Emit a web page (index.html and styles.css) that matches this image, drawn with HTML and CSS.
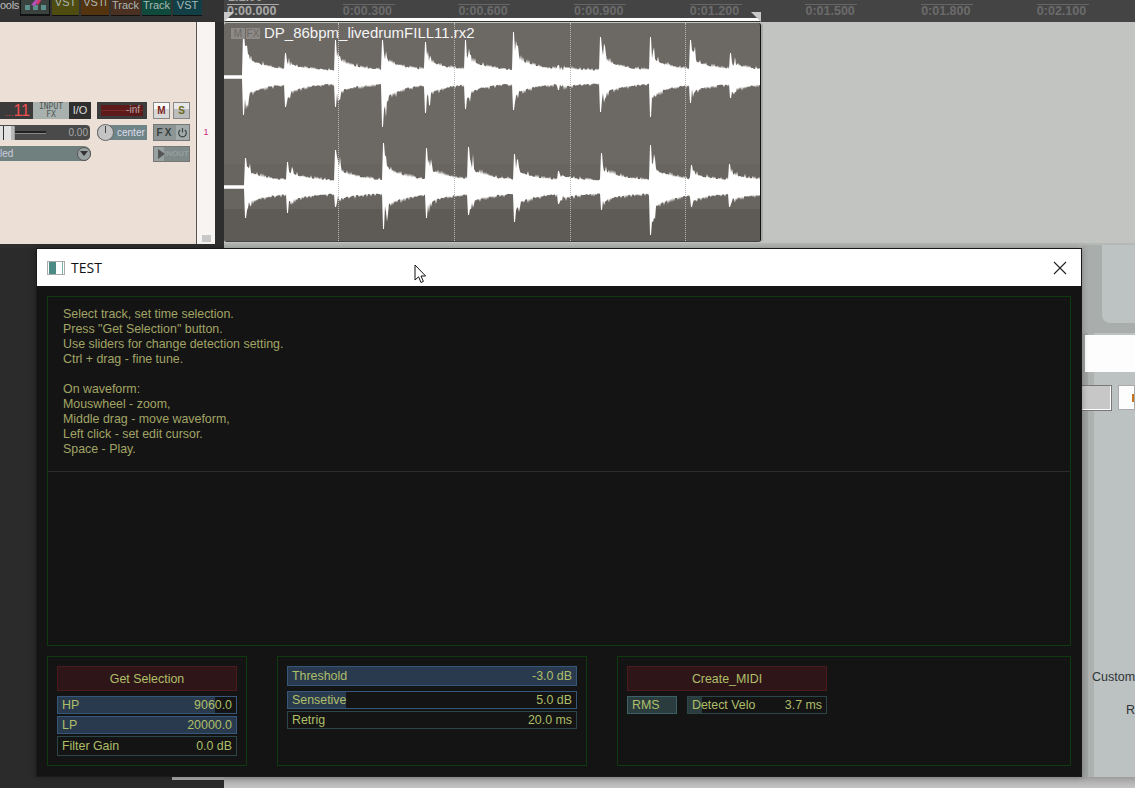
FILE: index.html
```html
<!DOCTYPE html>
<html lang="en">
<head>
    <meta charset="UTF-8" />
    <title>TEST</title>
    <link rel="stylesheet" href="styles.css">
</head>
<body>
<div class="desktop">

    <!-- DAW behind the script window -->
    <div class="daw">
        <div class="side">
            <div class="toolbar">
                <div class="tb-btn tb-tools">ools</div>
                <div class="tb-btn tb-icon">
                    <svg width="30" height="15" viewBox="0 0 30 15">
                        <rect x="5" y="6" width="5" height="5" fill="#5c8f8c"/>
                        <rect x="13" y="6" width="5" height="5" fill="#5c8f8c"/>
                        <rect x="21" y="6" width="5" height="5" fill="#5c8f8c"/>
                        <path d="M11 6 L16 0 L20 0 L15 7 Z" fill="#b04fb8"/>
                        <path d="M16 4 L19 0 L22 0 L18 6 Z" fill="#d23a6a"/>
                    </svg>
                </div>
                <div class="tb-btn tb-vst">VST</div>
                <div class="tb-btn tb-vsti">VSTi</div>
                <div class="tb-btn tb-track1">Track</div>
                <div class="tb-btn tb-track2">Track</div>
                <div class="tb-btn tb-vst2">VST</div>
            </div>
            <div class="track-row">
                <div class="tcp">
                    <div class="tcp-line">
                        <div class="tcp-left">
                            <div class="name-box">...<b>11</b></div>
                            <div class="input-fx">INPUT<br>FX</div>
                            <div class="io">I/O</div>
                        </div>
                        <div class="meter"><span>-inf</span></div>
                        <div class="tcp-right">
                            <div class="small-btn btn-m">M</div>
                            <div class="small-btn btn-s">S</div>
                        </div>
                    </div>
                    <div class="tcp-line">
                        <div class="fader">
                            <div class="fader-handle"></div>
                            <div class="fader-track"></div>
                            <span>0.00</span>
                        </div>
                        <div class="pan">
                            <div class="pan-knob"></div>
                            <span>center</span>
                        </div>
                        <div class="tcp-right">
                            <div class="fx-btn">
                                <span class="fx-label">FX</span>
                                <span class="fx-power">
                                    <svg width="11" height="11" viewBox="0 0 11 11"><path d="M3.2 3 A3.8 3.8 0 1 0 7.8 3 M5.5 1 V5.5" fill="none" stroke="#3c4444" stroke-width="1.2"/></svg>
                                </span>
                            </div>
                        </div>
                    </div>
                    <div class="tcp-line">
                        <div class="dropdown">
                            <span>led</span>
                            <div class="drop-arrow"></div>
                        </div>
                        <div class="tcp-right tcp-right-far">
                            <div class="route-btn">
                                <span class="route-play"></span>
                                <span class="route-label">INOUT</span>
                            </div>
                        </div>
                    </div>
                </div>
                <div class="track-num"><span>1</span><div class="corner-mark"></div></div>
            </div>
        </div>

        <div class="main">
            <div class="ruler">
                <div class="bar-label">1.1.00</div>
                <div class="tick tick-first"><span>0:00.000</span></div>
                <div class="tick"><span>0:00.300</span></div>
                <div class="tick"><span>0:00.600</span></div>
                <div class="tick"><span>0:00.900</span></div>
                <div class="tick"><span>0:01.200</span></div>
                <div class="tick"><span>0:01.500</span></div>
                <div class="tick"><span>0:01.800</span></div>
                <div class="tick"><span>0:02.100</span></div>
                <div class="sel-bar"></div>
            </div>
            <div class="arrange">
                <div class="item">
                    <div class="item-band"></div>
                    <svg class="wave" width="536" height="218" viewBox="0 0 536 218">
                        <path id="wave-top" fill="#fff"/>
                        <path id="wave-bottom" fill="#fff"/>
                    </svg>
                    <div class="grid-line grid-1"></div>
                    <div class="grid-line grid-2"></div>
                    <div class="grid-line grid-3"></div>
                    <div class="grid-line grid-4"></div>
                    <div class="item-head">
                        <span class="item-tag">M</span>
                        <span class="item-tag">FX</span>
                        <span class="item-name">DP_86bpm_livedrumFILL11.rx2</span>
                    </div>
                </div>
            </div>
            <div class="arrange-foot"></div>
        </div>
    </div>

    <!-- another window, mostly hidden -->
    <div class="back-window">
        <div class="back-head"><div class="back-head-inner"></div></div>
        <div class="back-white"></div>
        <div class="back-buttons">
            <div class="back-btn"></div>
            <div class="back-btn2"></div>
        </div>
        <div class="back-custom">Custom</div>
        <div class="back-r">R</div>
    </div>

    <div class="bottom-strip"></div>

    <div class="script-window">
        <div class="title-bar">
            <div class="title-icon"></div>
            <span class="title-text">TEST</span>
            <svg class="title-close" width="14" height="14" viewBox="0 0 14 14"><path d="M1 1 L13 13 M13 1 L1 13" stroke="#222" stroke-width="1.1"/></svg>
        </div>
        <div class="window-body">
            <div class="panel panel-top">
                <div class="help">
                    Select track, set time selection.<br>
                    Press "Get Selection" button.<br>
                    Use sliders for change detection setting.<br>
                    Ctrl + drag - fine tune.<br>
                    <br>
                    On waveform:<br>
                    Mouswheel - zoom,<br>
                    Middle drag - move waveform,<br>
                    Left click - set edit cursor.<br>
                    Space - Play.
                </div>
                <div class="panel-line"></div>
            </div>
            <div class="panel-row">
                <div class="panel panel-a">
                    <div class="action">Get Selection</div>
                    <div class="slider slider-blue">
                        <div class="slider-fill" style="width: 88%"></div>
                        <span class="slider-name">HP</span><span>9060.0</span>
                    </div>
                    <div class="slider slider-blue">
                        <div class="slider-fill" style="width: 100%"></div>
                        <span class="slider-name">LP</span><span>20000.0</span>
                    </div>
                    <div class="slider slider-plain slider-tall">
                        <span class="slider-name">Filter Gain</span><span>0.0 dB</span>
                    </div>
                </div>
                <div class="panel panel-b">
                    <div class="slider slider-blue slider-big">
                        <div class="slider-fill" style="width: 100%"></div>
                        <span class="slider-name">Threshold</span><span>-3.0 dB</span>
                    </div>
                    <div class="slider slider-blue">
                        <div class="slider-fill" style="width: 20%"></div>
                        <span class="slider-name">Sensetive</span><span>5.0 dB</span>
                    </div>
                    <div class="slider slider-plain">
                        <span class="slider-name">Retrig</span><span>20.0 ms</span>
                    </div>
                </div>
                <div class="panel panel-c">
                    <div class="action action-wide">Create_MIDI</div>
                    <div class="velo-row">
                        <div class="slider slider-teal rms"><span class="slider-name">RMS</span></div>
                        <div class="slider slider-plain velo">
                            <div class="slider-fill slider-fill-teal" style="width: 10%"></div>
                            <span class="slider-name">Detect Velo</span><span>3.7 ms</span>
                        </div>
                    </div>
                </div>
            </div>
        </div>
    </div>

    <svg class="mouse" width="13" height="20" viewBox="0 0 13 20">
        <path d="M1 1 V16 L4.6 12.8 L7 18.5 L9.4 17.4 L7 12 H11.6 Z" fill="#fff" stroke="#111" stroke-width="1"/>
    </svg>
</div>
<script src="waveform.js"></script>
</body>
</html>
```

FILE: styles.css
```css
* {
    box-sizing: border-box;
}
html, body {
    margin: 0;
    height: 100%;
    overflow: hidden;
}
body {
    font-family: "Liberation Sans", Arial, sans-serif;
    background-color: #2b2b2b;
}
.desktop {
    position: relative;
    width: 1135px;
    height: 788px;
    overflow: hidden;
}

/* DAW */
.daw {
    display: flex;
    height: 248px;
}
.side {
    width: 224px;
    flex: none;
    background-color: #2e2e2e;
}
.toolbar {
    display: flex;
    gap: 2px;
    height: 22px;
    padding-bottom: 7px;
    background-color: #333;
}
.tb-btn {
    width: 29px;
    font-size: 11px;
    line-height: 11px;
    text-align: center;
    color: #a9b7b5;
    box-shadow: 0 1px 0 #111;
}
.tb-tools {
    width: 18px;
    text-align: left;
    letter-spacing: -0.3px;
    color: #bbb;
    background-color: #333;
    box-shadow: none;
}
.tb-icon {
    width: 30px;
    background-color: #3a4240;
    border: 1px solid #111;
    border-top: 0;
}
.tb-icon svg {
    display: block;
    margin: -1px;
}
.tb-vst {
    width: 27px;
    background-color: #4f4c12;
    line-height: 5px;
}
.tb-vsti {
    width: 28px;
    background-color: #54330f;
    line-height: 5px;
}
.tb-track1 {
    background-color: #4a3020;
}
.tb-track2 {
    background-color: #0f4a3c;
}
.tb-vst2 {
    background-color: #123f46;
    line-height: 11px;
}
.track-row {
    display: flex;
    height: 222px;
}
.tcp {
    width: 197px;
    padding-top: 80px;
    background-color: #ecdfd6;
    border-right: 1px solid #555;
}
.tcp-line {
    display: flex;
    align-items: flex-start;
    height: 22px;
}
.tcp-left {
    display: flex;
    width: 91px;
    height: 17px;
    background-color: #2f2f2f;
}
.name-box {
    width: 33px;
    padding-right: 3px;
    font-size: 10px;
    line-height: 17px;
    text-align: right;
    color: #c84848;
    background-color: #3a3a3a;
}
.name-box b {
    font-size: 16px;
    font-weight: normal;
    color: #f05050;
}
.input-fx {
    width: 36px;
    font-family: "DejaVu Sans Mono", monospace;
    font-size: 8px;
    line-height: 8px;
    padding-top: 1px;
    text-align: center;
    color: #4b5552;
    background-color: #a9b1af;
}
.io {
    flex: 1;
    font-size: 11px;
    line-height: 17px;
    text-align: center;
    color: #ddd;
}
.meter {
    width: 50px;
    height: 17px;
    margin-left: 6px;
    padding: 3px 4px;
    background-color: #3c3c3c;
}
.meter span {
    display: block;
    height: 11px;
    padding-right: 3px;
    font-size: 10px;
    line-height: 10px;
    text-align: right;
    color: #b5a5a5;
    background: linear-gradient(#5c1a1a 0 45%, #7a2c2c 45% 55%, #5c1a1a 55%);
}
.tcp-right {
    display: flex;
    gap: 3px;
    margin-left: 6px;
}
.small-btn {
    width: 17px;
    height: 17px;
    font-size: 10px;
    font-weight: bold;
    line-height: 16px;
    text-align: center;
    border: 1px solid #888;
    background: linear-gradient(#fafafa 0 40%, #d8d8d8 40%);
}
.btn-m {
    color: #7c1c1c;
}
.btn-s {
    color: #6a6a20;
    background: linear-gradient(#e8e8e8 0 40%, #bcbcbc 40%);
}
.fader {
    display: flex;
    align-items: center;
    width: 90px;
    height: 15px;
    margin-top: 1px;
    background-color: #4a4a4a;
    border-radius: 0 4px 4px 0;
    font-size: 10px;
    color: #a8a8a8;
}
.fader-handle {
    width: 15px;
    height: 14px;
    background: linear-gradient(90deg, #e2e2e2 0 3px, #333 3px 4px, #e2e2e2 4px 11px, #b8b8b8 11px);
    border-right: 1px solid #999;
}
.fader-track {
    width: 31px;
    height: 3px;
    background-color: #222;
    border-bottom: 1px solid #888;
}
.fader span {
    flex: 1;
    padding-right: 2px;
    text-align: right;
}
.pan {
    display: flex;
    align-items: center;
    width: 50px;
    height: 15px;
    margin-left: 7px;
    margin-top: 1px;
    font-size: 10px;
    color: #dde;
    background-color: #6f8486;
    border-radius: 7px 0 0 7px;
}
.pan-knob {
    position: relative;
    width: 17px;
    height: 17px;
    flex: none;
    margin-right: 3px;
    border-radius: 50%;
    border: 1px solid #666;
    background-color: #c4c4c4;
}
.pan-knob::after {
    content: "";
    position: absolute;
    left: 7px;
    top: 1px;
    width: 1px;
    height: 7px;
    background-color: #444;
}
.fx-btn {
    display: flex;
    width: 37px;
    height: 17px;
    background-color: #8d9695;
    border: 1px solid #777;
    font-size: 10px;
}
.fx-label {
    flex: 1;
    font-weight: bold;
    letter-spacing: 2px;
    line-height: 15px;
    text-align: center;
    color: #38403f;
}
.fx-power {
    width: 13px;
    padding: 2px 1px;
    background-color: #a3abaa;
}
.fx-power svg {
    display: block;
}
.dropdown {
    display: flex;
    align-items: center;
    justify-content: space-between;
    width: 91px;
    height: 15px;
    font-size: 10px;
    color: #ccd;
    background-color: #70807f;
    border-radius: 0 8px 8px 0;
}
.drop-arrow {
    position: relative;
    width: 14px;
    height: 14px;
    border-radius: 50%;
    background-color: #9ba3a2;
    border: 1px solid #555;
}
.drop-arrow::after {
    content: "";
    position: absolute;
    left: 2px;
    top: 3px;
    border: 4px solid transparent;
    border-top: 5px solid #333;
}
.tcp-right-far {
    margin-left: 62px;
}
.route-btn {
    display: flex;
    width: 37px;
    height: 16px;
    background-color: #7e8988;
    border: 1px solid #777;
}
.route-play {
    width: 14px;
    position: relative;
    background-color: #98a1a0;
}
.route-play::after {
    content: "";
    position: absolute;
    left: 4px;
    top: 2px;
    border: 5px solid transparent;
    border-left: 7px solid #555;
}
.route-label {
    flex: 1;
    font-size: 8px;
    font-weight: bold;
    line-height: 14px;
    text-align: center;
    color: #96a0a0;
}
.track-num {
    display: flex;
    flex-direction: column;
    align-items: center;
    justify-content: flex-end;
    width: 18px;
    padding-bottom: 2px;
    background-color: #f7f4f2;
    font-size: 9px;
    color: #d02a7a;
}
.track-num span {
    margin-bottom: 98px;
}
.corner-mark {
    width: 9px;
    height: 7px;
    align-self: flex-end;
    margin-right: 4px;
    background-color: #c8c8c8;
}
.main {
    position: relative;
    flex: 1;
    display: flex;
    flex-direction: column;
    background-color: #c2c4c2;
}
.ruler {
    position: relative;
    display: flex;
    height: 22px;
    overflow: hidden;
    background-color: #444;
}
.bar-label {
    position: absolute;
    left: 4px;
    top: -9px;
    font-size: 12.5px;
    font-weight: bold;
    line-height: 13px;
    color: #a8a8a8;
}
.tick {
    width: 115.7px;
    flex: none;
    padding: 4px 0 0 3px;
    font-size: 12.5px;
    font-weight: bold;
    line-height: 13px;
    color: #6b6b6b;
}
.tick span {
    display: block;
    width: 52px;
    border-top: 1px solid #666;
}
.tick-first {
    color: #a8a8a8;
}
.tick-first span {
    border-top-color: #aaa;
}
.sel-bar {
    position: absolute;
    left: 0;
    top: 18px;
    width: 537px;
    height: 4px;
    background-color: #fff;
    border-bottom: 1px solid #333;
}
.sel-bar::before,
.sel-bar::after {
    content: "";
    position: absolute;
    top: -6px;
    width: 10px;
    height: 10px;
    background-color: #c8c8c8;
}
.sel-bar::before {
    left: 0;
    clip-path: polygon(0 0, 100% 0, 0 100%);
}
.sel-bar::after {
    right: 0;
    clip-path: polygon(0 0, 100% 0, 100% 100%);
}
.arrange {
    height: 221px;
}
.item {
    position: relative;
    width: 537px;
    height: 219px;
    margin-top: 1px;
    overflow: hidden;
    background-color: #6c6864;
    border-right: 1px solid #111;
    border-bottom: 1px solid #444;
    border-radius: 3px;
    box-shadow: 2px 0 0 #a8aaa8;
}
.item-band {
    position: absolute;
    left: 0;
    right: 0;
    top: 141px;
    bottom: 0;
    background: linear-gradient(#68645f 0 45px, #5e5a56 45px);
}
.wave {
    position: absolute;
    left: 0;
    top: 0;
}
.grid-line {
    position: absolute;
    top: 0;
    bottom: 0;
    width: 0;
    border-left: 1px dotted #b8b8b8;
}
.grid-1 { left: 114px; }
.grid-2 { left: 230px; }
.grid-3 { left: 346px; }
.grid-4 { left: 461px; }
.item-head {
    position: absolute;
    left: 7px;
    top: 1px;
    display: flex;
    align-items: center;
    gap: 1px;
}
.item-tag {
    width: 14px;
    height: 11px;
    font-size: 10px;
    line-height: 11px;
    text-align: center;
    color: #6c6864;
    background-color: #8c8986;
}
.item-name {
    margin-left: 3px;
    font-size: 15px;
    line-height: 18px;
    color: #f4f4f4;
}
.arrange-foot {
    height: 5px;
    background-color: #b6b8b6;
}

/* window behind, right of the script window */
.back-window {
    position: absolute;
    left: 1082px;
    top: 245px;
    width: 53px;
    height: 532px;
    background: linear-gradient(90deg, #9fa3a2 0 6px, #adb1b0 6px 12px, #bcc2c1 12px);
}
.back-head {
    height: 88px;
    padding: 0 0 10px 20px;
    background-color: #a9adac;
}
.back-head-inner {
    height: 100%;
    background-color: #bcc3c2;
    border-bottom-left-radius: 8px;
}
.back-white {
    height: 37px;
    margin: 2px 0 0 3px;
    background-color: #fdfdfd;
}
.back-buttons {
    display: flex;
    gap: 6px;
    margin-top: 13px;
}
.back-btn {
    width: 30px;
    height: 26px;
    background-color: #c6c7c6;
    border: 1px solid #777;
    border-left: 0;
    box-shadow: inset -1px -1px 0 #fff;
}
.back-btn2 {
    position: relative;
    flex: 1;
    height: 25px;
    background-color: #fdfdfd;
    border: 1px solid #aaa;
}
.back-btn2::after {
    content: "";
    position: absolute;
    right: 0;
    top: 8px;
    width: 2px;
    height: 8px;
    background-color: #c8761e;
}
.back-custom {
    margin: 259px 0 0 10px;
    font-size: 12.5px;
    white-space: nowrap;
    color: #2f3438;
}
.back-r {
    margin: 19px 0 0 44px;
    font-size: 12.5px;
    color: #2f3438;
}
.bottom-strip {
    position: absolute;
    left: 224px;
    right: 0;
    top: 777px;
    height: 11px;
    background: linear-gradient(#9c9c9c, #b4b4b4 50%, #c2c4c2);
}
.bottom-strip::before {
    content: "";
    position: absolute;
    left: -52px;
    top: 0;
    width: 52px;
    height: 3px;
    background-color: #a8a8a8;
}

/* script window */
.script-window {
    position: absolute;
    left: 36px;
    top: 248px;
    width: 1046px;
    height: 529px;
    background-color: #141414;
    border: 1px solid #1a1a1a;
    box-shadow: 0 0 6px rgba(0,0,0,0.3);
}
.title-bar {
    display: flex;
    align-items: center;
    height: 37px;
    padding: 0 14px 0 10px;
    background-color: #fff;
}
.title-icon {
    width: 18px;
    height: 14px;
    margin-right: 6px;
    border: 1px solid #aaa;
    background: linear-gradient(90deg, #fff 0 1px, #4c8a86 1px 8px, #fff 8px 14px, #7fb0b0 14px 15px, #fff 15px);
}
.title-text {
    flex: 1;
    font-family: "Open Sans", sans-serif;
    font-size: 14px;
    color: #111;
}
.title-close {
    display: block;
}
.window-body {
    display: flex;
    flex-direction: column;
    gap: 10px;
    padding: 10px;
}
.panel {
    border: 1px solid #0f3a10;
}
.panel-top {
    height: 350px;
}
.help {
    height: 174px;
    padding: 10px 0 0 15px;
    font-size: 12.4px;
    line-height: 15px;
    color: #a2a465;
}
.panel-line {
    height: 1px;
    background-color: #2a2f2a;
}
.panel-row {
    display: flex;
    gap: 30px;
    height: 110px;
}
.panel-a,
.panel-b,
.panel-c {
    display: flex;
    flex-direction: column;
    gap: 2px;
    padding: 9px;
}
.panel-a {
    width: 200px;
}
.panel-b {
    width: 310px;
}
.panel-c {
    width: 454px;
}
.action {
    width: 180px;
    height: 25px;
    margin-bottom: 3px;
    font-size: 12.4px;
    line-height: 24px;
    text-align: center;
    color: #aebf68;
    background-color: #2e1618;
    border: 1px solid #4a1a1c;
}
.action-wide {
    width: 200px;
}
.slider {
    position: relative;
    display: flex;
    justify-content: space-between;
    height: 18px;
    padding: 0 4px;
    font-size: 12.4px;
    line-height: 16px;
    color: #aebf68;
}
.slider span {
    position: relative;
}
.slider-blue {
    border: 1px solid #35587a;
}
.slider-plain {
    border: 1px solid #2c4648;
}
.slider-teal {
    border: 1px solid #3c6266;
    background-color: #2a3c3e;
}
.slider-fill {
    position: absolute;
    left: 0;
    top: 0;
    bottom: 0;
    background-color: #2a3a4e;
}
.slider-fill-teal {
    background-color: #2a3c3e;
}
.slider-tall {
    height: 20px;
    line-height: 18px;
}
.slider-big {
    height: 20px;
    margin-bottom: 3px;
    line-height: 18px;
}
.velo-row {
    display: flex;
    gap: 10px;
}
.rms {
    width: 50px;
}
.velo {
    width: 140px;
}
.mouse {
    position: absolute;
    left: 414px;
    top: 264px;
}
```

FILE: waveform.js
```js
// draws the two audio peaks of the media item, x is relative to the item
// a hit is [x, height above the center, depth below the center]
const channels = [
    {
        id: 'wave-top',
        center: 54,
        hits: [[19, 44, 38], [61, 24, 30], [111, 37, 30], [158, 37, 50], [201, 35, 36], [241, 37, 32],
               [289, 45, 33], [334, 12, 13], [376, 40, 35], [426, 40, 40], [466, 37, 26], [506, 24, 21]],
    },
    {
        id: 'wave-bottom',
        center: 164,
        hits: [[21, 29, 31], [63, 25, 26], [111, 37, 20], [159, 44, 42], [202, 39, 31], [244, 40, 28],
               [290, 33, 35], [334, 16, 17], [377, 34, 23], [426, 42, 48], [467, 22, 20], [505, 23, 20]],
    },
];

let seed = 12345;
function rand() {
    seed = (seed * 1103515245 + 12345) & 0x7fffffff;
    return seed / 0x7fffffff;
}

function envelope(hits, x, side) {
    let last = null;
    hits.forEach(h => {
        if (h[0] <= x) last = h;
    });
    if (!last) return 1.7;

    const peak = last[side + 1];
    const d = x - last[0];
    if (d < 2) return peak;
    if (d < 6) return peak * (0.45 + rand() * 0.4);
    const body = 5.5 + peak * 0.35 * Math.exp(-d / 20);
    const comb = d % 2 === 0 ? rand() * (3 + peak * 0.16 * Math.exp(-d / 14)) : rand();
    return body + comb;
}

channels.forEach(ch => {
    const upper = [];
    const lower = [];
    for (let x = 0; x <= 536; x += 1) {
        upper.push(`${x} ${(ch.center - envelope(ch.hits, x, 0)).toFixed(1)}`);
        lower.unshift(`${x} ${(ch.center + envelope(ch.hits, x, 1)).toFixed(1)}`);
    }
    document.getElementById(ch.id).setAttribute('d', `M${upper.join(' L')} L${lower.join(' L')} Z`);
});
```
